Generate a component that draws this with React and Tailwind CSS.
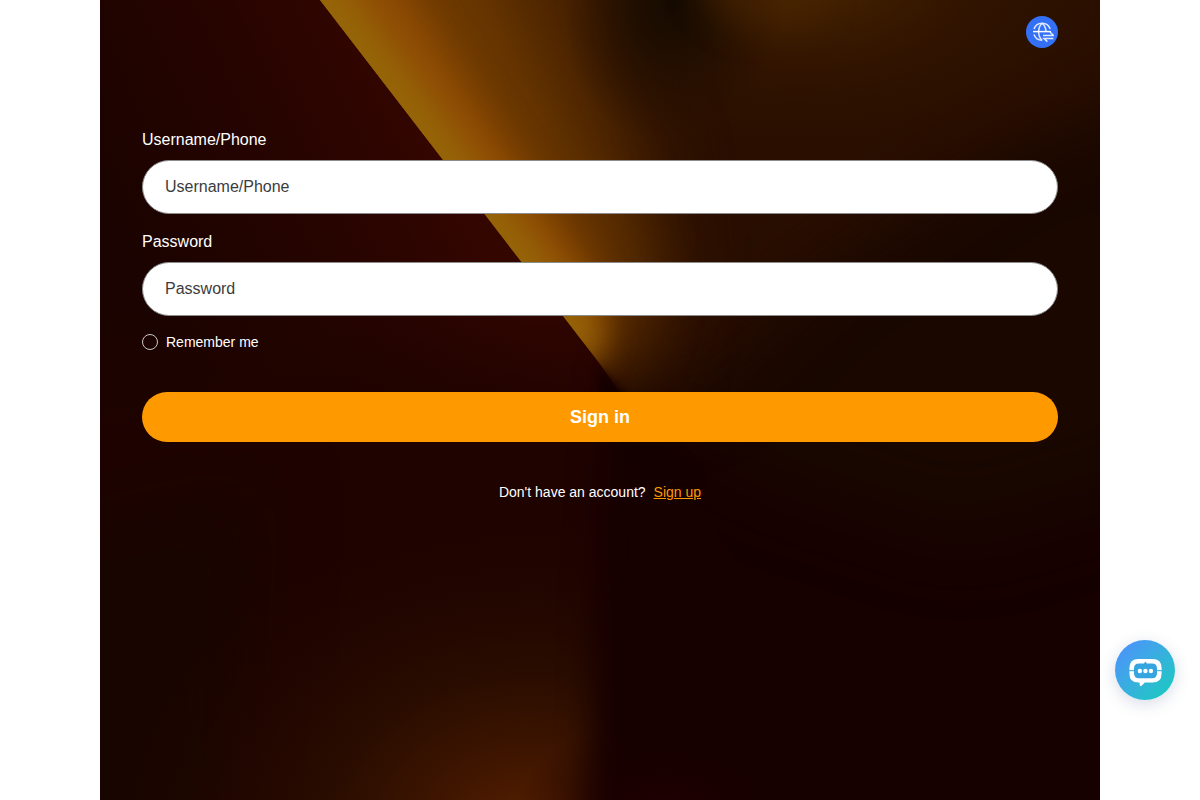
import React from 'react';

const fields = [
  { id: 'username', label: 'Username/Phone', type: 'text', autoComplete: 'username' },
  { id: 'password', label: 'Password', type: 'password', autoComplete: 'current-password' }
];

// Dark backdrop with the golden ray that ends in the middle of the panel
const Backdrop = () => (
  <svg
    className="absolute inset-0 h-full w-full"
    viewBox="0 0 1000 800"
    preserveAspectRatio="xMidYMin slice"
    aria-hidden="true"
  >
    <defs>
      <linearGradient id="left" gradientUnits="userSpaceOnUse" x1="360" y1="182" x2="60" y2="330">
        <stop offset="0" stopColor="#340600" />
        <stop offset="0.45" stopColor="#260400" />
        <stop offset="1" stopColor="#1a0300" />
      </linearGradient>
      <linearGradient id="leftFade" x1="0" y1="0" x2="0" y2="1">
        <stop offset="0.35" stopColor="#1e0300" stopOpacity="0" />
        <stop offset="0.55" stopColor="#1e0300" />
      </linearGradient>
      <radialGradient id="topGlow" gradientUnits="userSpaceOnUse" cx="0" cy="0" r="1" gradientTransform="translate(700 -20) scale(380 200)">
        <stop offset="0" stopColor="#4a2600" />
        <stop offset="0.45" stopColor="#351700" stopOpacity="0.7" />
        <stop offset="1" stopColor="#2a0f00" stopOpacity="0" />
      </radialGradient>
      <radialGradient id="topShade" gradientUnits="userSpaceOnUse" cx="0" cy="0" r="1" gradientTransform="translate(575 0) rotate(15) scale(110 140)">
        <stop offset="0" stopColor="#140a00" />
        <stop offset="0.35" stopColor="#1a0c00" stopOpacity="0.8" />
        <stop offset="1" stopColor="#200c00" stopOpacity="0" />
      </radialGradient>
      <radialGradient id="bottomGlow" gradientUnits="userSpaceOnUse" cx="0" cy="0" r="1" gradientTransform="translate(430 830) scale(400 310)">
        <stop offset="0" stopColor="#582000" />
        <stop offset="0.25" stopColor="#3e1500" />
        <stop offset="0.5" stopColor="#2a0d00" />
        <stop offset="1" stopColor="#220600" stopOpacity="0" />
      </radialGradient>
      <radialGradient id="redGlow" gradientUnits="userSpaceOnUse" cx="0" cy="0" r="1" gradientTransform="translate(565 810) scale(150 90)">
        <stop offset="0" stopColor="#1f0002" />
        <stop offset="1" stopColor="#180000" stopOpacity="0" />
      </radialGradient>
      <clipPath id="rightSide">
        <path d="M220 0 L500 364 L800 800 H1000 V0 Z" />
      </clipPath>
      <filter id="blur4" x="-50%" y="-50%" width="200%" height="200%" colorInterpolationFilters="sRGB">
        <feGaussianBlur stdDeviation="4" />
      </filter>
      <filter id="blur16" x="-50%" y="-50%" width="200%" height="200%" colorInterpolationFilters="sRGB">
        <feGaussianBlur stdDeviation="16" />
      </filter>
      <filter id="blur36" x="-50%" y="-50%" width="200%" height="200%" colorInterpolationFilters="sRGB">
        <feGaussianBlur stdDeviation="36" />
      </filter>
    </defs>

    <rect width="1000" height="800" fill="#1c0400" />
    <rect width="1000" height="800" fill="url(#left)" />
    <rect width="1000" height="800" fill="url(#leftFade)" />
    <path d="M-100 540 L160 480 L140 900 H-100 Z" fill="#190500" filter="url(#blur36)" />

    {/* glow along the bottom edge, cut off at the centre line */}
    <rect y="480" width="1000" height="320" fill="url(#bottomGlow)" />
    <path d="M510 364 L494 620 L488 900 H1100 V440 Z" fill="#160000" filter="url(#blur16)" />
    <rect x="400" y="700" width="600" height="100" fill="url(#redGlow)" />

    {/* right side and the ray itself */}
    <g clipPath="url(#rightSide)">
      <path d="M100 -100 L500 364 L570 425 L670 480 L860 540 L1100 470 V-100 Z" fill="#190700" filter="url(#blur36)" />
      <path d="M100 -150 L500 364 L580 400 L720 270 L900 150 L1100 80 V-150 Z" fill="#290e00" filter="url(#blur36)" />
      <rect x="300" width="700" height="220" fill="url(#topGlow)" />
      <path d="M60 -150 L440 364 L500 384 L546 370 L570 260 L480 -150 Z" fill="#4a2300" filter="url(#blur36)" />
      <path d="M60 -150 L460 364 L506 350 L530 270 L380 -60 V-150 Z" fill="#6e3a00" filter="url(#blur36)" />
      <path d="M60 -150 L480 364 L504 345 L500 290 L275 -60 V-150 Z" fill="#8f4c04" filter="url(#blur16)" />
      <path d="M60 -150 L460 364 L498 350 L486 314 L234 -30 L170 -150 Z" fill="#966608" filter="url(#blur16)" />
      <rect x="400" width="300" height="200" fill="url(#topShade)" />
      <path d="M606 -40 L600 0 L640 30 L720 20 V-40 Z" fill="#4a2500" fillOpacity="0.6" filter="url(#blur16)" />
    </g>

    {/* shadow falling away from the tip */}
    <path d="M499 368 L530 398 L600 480 L540 480 L500 400 Z" fill="#150000" filter="url(#blur4)" />
  </svg>
);

const LanguageIcon = () => (
  <svg className="h-6 w-6" viewBox="0 0 24 24" fill="none" stroke="#dfe8ff" strokeWidth="1.5" aria-hidden="true">
    <path d="M20.2 9A8.6 8.6 0 0 0 4 9M4 14.6A8.6 8.6 0 0 0 12.2 20.3" />
    <path d="M12 3.2C9.6 5.6 8.6 8.4 8.6 11.8S9.6 18 12 20.3" />
    <path d="M12 3.2C14.8 5.4 15.8 8 16 11.6" />
    <path d="M3 11.6H21" stroke="#fff" />
    <path d="M13 15.4H23.4L20 12M23.4 18.4H14L17.4 21.6" />
  </svg>
);

const ChatIcon = () => (
  <svg className="h-9 w-9" viewBox="0 0 36 36" aria-hidden="true">
    <path
      d="M11.4 7H25.6Q34.6 7 34.6 16V21.4Q34.6 30.6 25.6 30.6H17.8L14.6 33.8Q13 34.8 12.6 33V30.6H11.4Q2.4 30.6 2.4 21.4V16Q2.4 7 11.4 7Z"
      fill="#fff"
    />
    <path
      d="M12 11.4H17L18.4 9.4L19.8 11.4H25Q30 11.4 30 16.4V21.2Q30 26.2 25 26.2H12Q7 26.2 7 21.2V16.4Q7 11.4 12 11.4Z"
      fill="#34a5de"
    />
    <path d="M2 18.7H7M30 18.7H35" stroke="#34a5de" strokeWidth="1" />
    <circle cx="12.9" cy="19" r="2.2" fill="#fff" />
    <circle cx="18.4" cy="19" r="2.2" fill="#fff" />
    <circle cx="23.9" cy="19" r="2.2" fill="#fff" />
  </svg>
);

const App = () => {
  return (
    <div className="min-h-screen bg-white font-['Liberation_Sans',Arial,sans-serif]">
      <div className="relative isolate mx-auto min-h-screen max-w-[1000px] overflow-hidden bg-[#1a0300] text-white">
        <Backdrop />

        <div className="relative px-[42px] pt-4 pb-10">
          <header className="flex justify-end">
            <button
              type="button"
              aria-label="Change language"
              className="flex h-8 w-8 items-center justify-center rounded-full bg-[#3370f6]"
            >
              <LanguageIcon />
            </button>
          </header>

          {/* Sign in form */}
          <form className="mt-20 flex flex-col" onSubmit={(e) => e.preventDefault()}>
            <div className="flex flex-col gap-4">
              {fields.map((field) => (
                <div key={field.id} className="flex flex-col gap-2">
                  <label htmlFor={field.id} className="text-base">
                    {field.label}
                  </label>
                  <input
                    id={field.id}
                    type={field.type}
                    placeholder={field.label}
                    autoComplete={field.autoComplete}
                    className="h-[54px] w-full rounded-full border border-[#8c8c8c] bg-white px-[22px] text-base text-[#333] outline-none placeholder:text-[#3c3c3c]"
                  />
                </div>
              ))}
            </div>

            <label className="mt-4 flex items-center gap-2 self-start text-sm">
              <input
                type="checkbox"
                className="h-4 w-4 appearance-none rounded-full border border-[#c8c8c8] checked:bg-[#ff9900]"
              />
              Remember me
            </label>

            <button type="submit" className="mt-10 h-[50px] rounded-full bg-[#ff9900] text-lg font-bold">
              Sign in
            </button>
          </form>

          <p className="mt-10 flex justify-center gap-2 text-sm">
            Don't have an account?
            <a href="#signup" className="text-[#ff9900] underline">
              Sign up
            </a>
          </p>
        </div>
      </div>

      {/* Support chat */}
      <button
        type="button"
        aria-label="Open chat"
        className="fixed right-[25px] bottom-[100px] flex h-[60px] w-[60px] items-center justify-center rounded-full bg-linear-to-br from-[#4f8cff] to-[#08cdb9] shadow-[0_4px_16px_rgba(60,80,140,0.2)]"
      >
        <ChatIcon />
      </button>
    </div>
  );
};

export default App;
